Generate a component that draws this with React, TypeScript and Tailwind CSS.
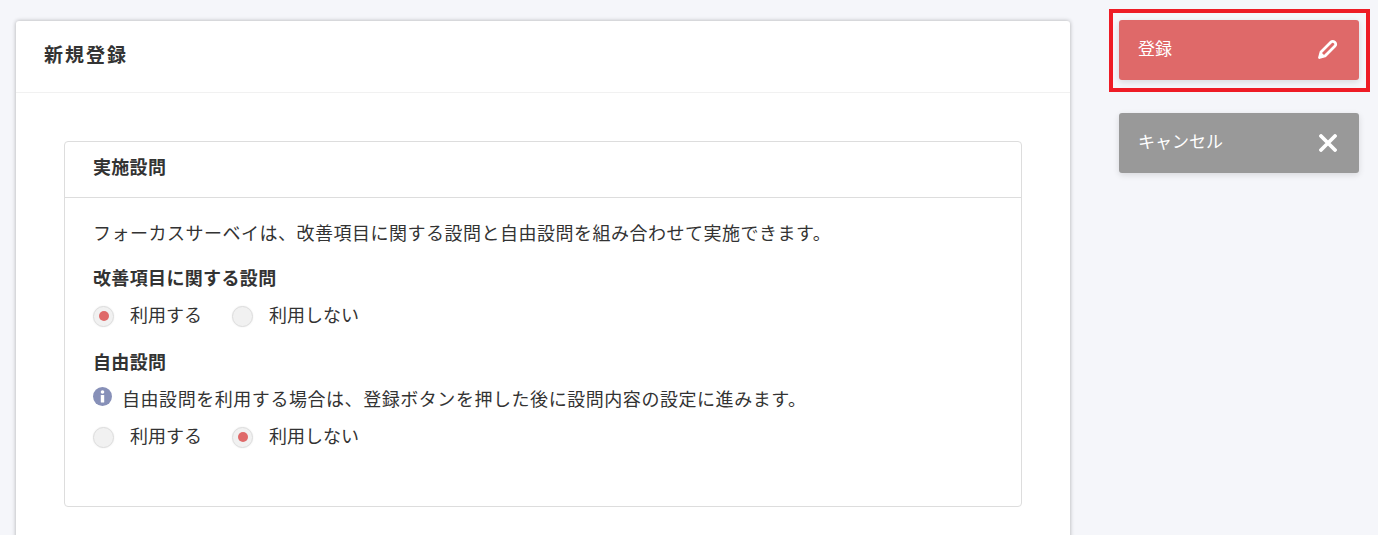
function Radio({ checked, label }: { checked?: boolean; label: string }) {
  return (
    <label className="flex items-center">
      <span className="flex h-[21px] w-[21px] items-center justify-center rounded-full border border-[#dddddd] bg-[#f1f1f1] shadow-[0_0_2px_rgba(0,0,0,0.08)]">
        {checked && <span className="h-[10px] w-[10px] rounded-full bg-[#df6969]" />}
      </span>
      <span className="mb-1 ml-4 text-[18px] leading-[24px] text-[#333333]">{label}</span>
    </label>
  );
}

function PencilIcon() {
  return (
    <svg viewBox="0 0 20 20" className="h-5 w-5" fill="none">
      <path d="M1.5 18.5 L3 13 L13 3 A2.4 2.4 0 0 1 16.4 3 L17 3.6 A2.4 2.4 0 0 1 17 7 L7 17 Z" stroke="#ffffff" strokeWidth="2.8" strokeLinejoin="round" />
      <path d="M0.6 19.4 L2.4 12.4 L7.6 17.6 Z" fill="#ffffff" />
    </svg>
  );
}

function CrossIcon() {
  return (
    <svg viewBox="0 0 18 18" className="h-[18px] w-[18px]" fill="none">
      <path d="M2 2 L16 16 M16 2 L2 16" stroke="#ffffff" strokeWidth="3.8" strokeLinecap="round" />
    </svg>
  );
}

export default function App() {
  return (
    <div className="flex h-[535px] items-start overflow-hidden bg-[#f5f6fa] font-['Noto_Sans_CJK_JP',sans-serif] text-[#333333]">
      <div className="ml-4 mt-[21px] h-[600px] w-[1054px] rounded-t-[3px] bg-white shadow-[0_0_4px_rgba(0,0,0,0.3)]">
        <div className="flex h-[72px] items-center border-b border-[#f1f1f1] pb-[5px] pl-7 text-[19px] font-bold tracking-[2px]">
          新規登録
        </div>
        <div className="mx-12 mt-12 h-[366px] w-[958px] rounded-[4px] border border-[#dddddd]">
          <div className="flex h-[56px] items-center border-b border-[#dddddd] pb-[6px] pl-7 text-[18px] font-bold tracking-[0.3px]">
            実施設問
          </div>
          <div className="pl-7 pt-[21px]">
            <p className="text-[18px] leading-[26px] tracking-[0.5px]">
              フォーカスサーベイは、改善項目に関する設問と自由設問を組み合わせて実施できます。
            </p>
            <h4 className="mt-[22px] text-[18px] font-bold leading-[20px] tracking-[0.35px]">改善項目に関する設問</h4>
            <div className="mt-[15px] flex gap-[30px]">
              <Radio checked label="利用する" />
              <Radio label="利用しない" />
            </div>
            <h4 className="mt-[21px] text-[18px] font-bold leading-[20px] tracking-[0.35px]">自由設問</h4>
            <div className="mt-[14px] flex items-center">
              <svg viewBox="0 0 20 20" className="mb-1 h-[19px] w-[19px]">
                <circle cx="10" cy="10" r="10" fill="#8790b8" />
                <circle cx="10" cy="5.2" r="1.9" fill="#ffffff" />
                <rect x="8.2" y="8.4" width="3.6" height="8" rx="0.6" fill="#ffffff" />
              </svg>
              <span className="ml-[10px] text-[18px] leading-[26px] tracking-[0.55px]">
                自由設問を利用する場合は、登録ボタンを押した後に設問内容の設定に進みます。
              </span>
            </div>
            <div className="mt-3 flex gap-[30px]">
              <Radio label="利用する" />
              <Radio checked label="利用しない" />
            </div>
          </div>
        </div>
      </div>
      <div className="ml-[39px] mt-[9px] w-[261px]">
        <div className="border-[4px] border-[#ee1c25] pb-2 pl-[6px] pr-[7px] pt-[7px]">
          <button className="flex h-[60px] w-[240px] items-center justify-between rounded-[3px] bg-[#df6969] pb-[4px] pl-[19px] pr-[21px] text-[17px] text-white shadow-[0_2px_6px_rgba(0,0,0,0.12)]">
            登録
            <span className="mt-[2px]"><PencilIcon /></span>
          </button>
        </div>
        <button className="ml-[10px] mt-[21px] flex h-[60px] w-[240px] items-center justify-between rounded-[3px] bg-[#999999] pb-[4px] pl-[19px] pr-[22px] text-[17px] text-white shadow-[0_2px_6px_rgba(0,0,0,0.12)]">
          キャンセル
          <span className="mt-[4px]"><CrossIcon /></span>
        </button>
      </div>
    </div>
  );
}
